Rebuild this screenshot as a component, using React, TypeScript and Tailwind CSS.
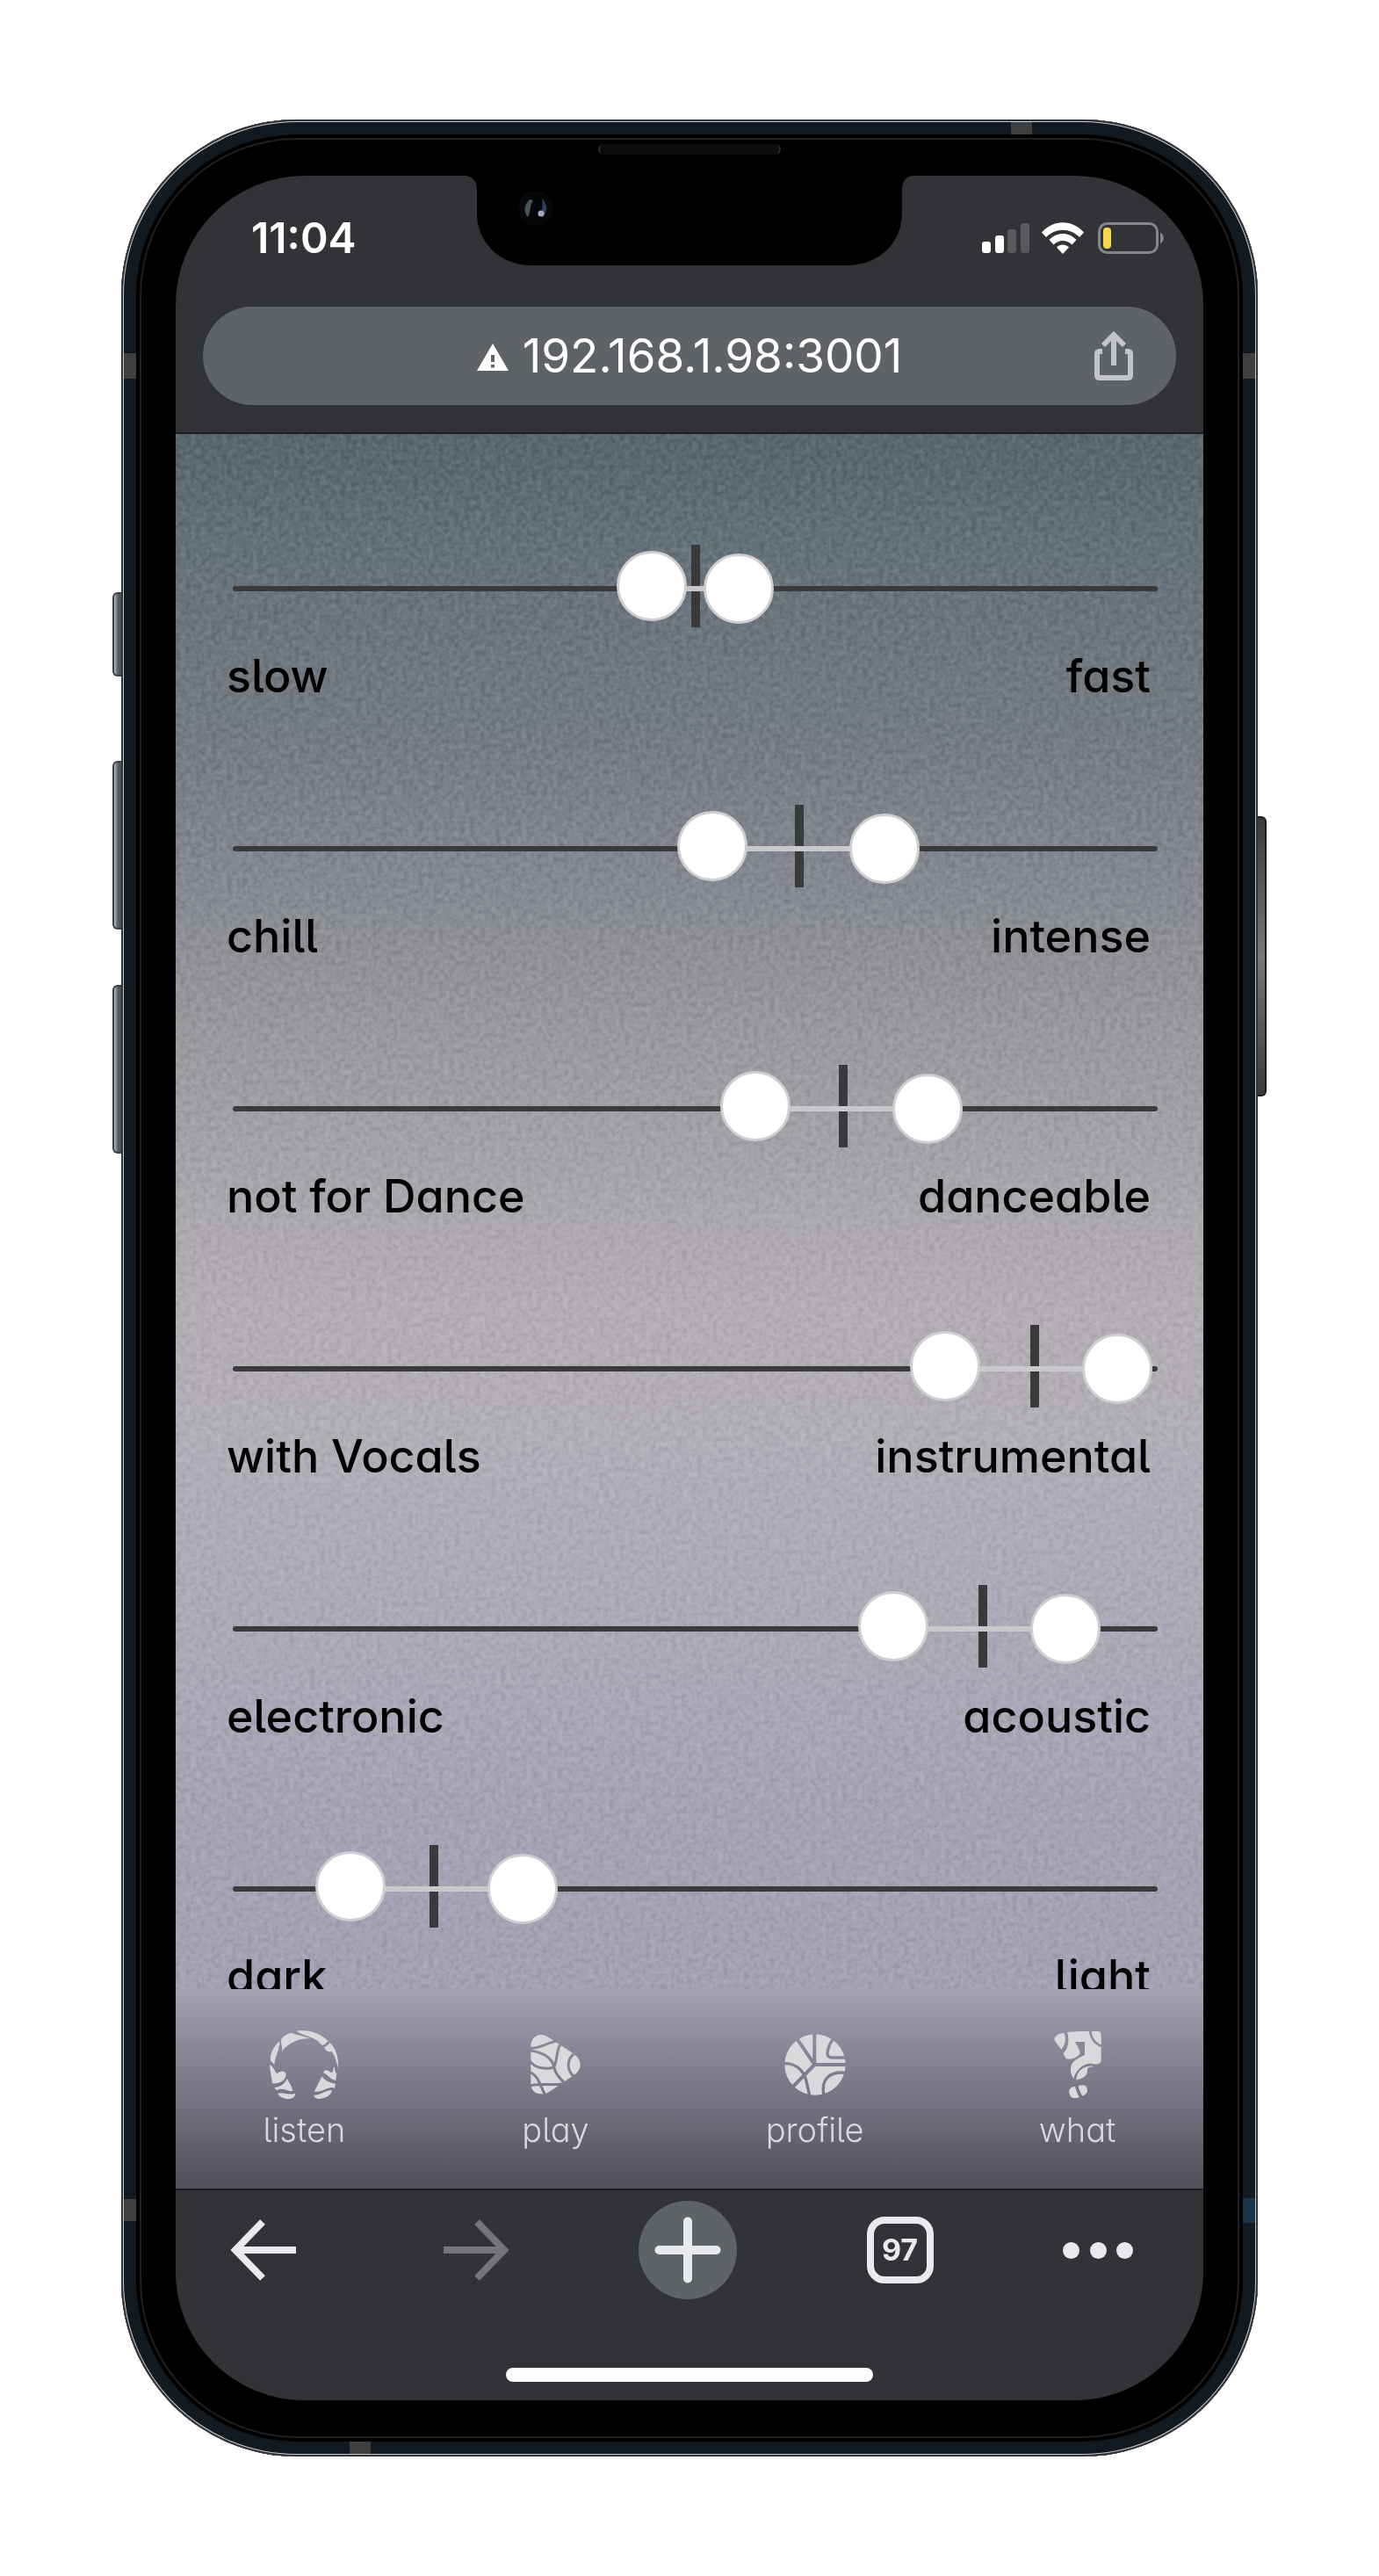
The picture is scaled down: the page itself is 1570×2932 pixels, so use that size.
import { useState } from "react";

type Trait = { low: string; high: string; min: number; max: number };

const TRAITS: Trait[] = [
  { low: "slow", high: "fast", min: 45, max: 55 },
  { low: "chill", high: "intense", min: 52, max: 72 },
  { low: "not for Dance", high: "danceable", min: 57, max: 77 },
  { low: "with Vocals", high: "instrumental", min: 79, max: 99 },
  { low: "electronic", high: "acoustic", min: 73, max: 93 },
  { low: "dark", high: "light", min: 10, max: 30 },
];

const RANGE =
  "pointer-events-none absolute -left-1 h-20 w-[calc(100%+8px)] appearance-none bg-transparent [&::-webkit-slider-thumb]:pointer-events-auto [&::-webkit-slider-thumb]:size-20 [&::-webkit-slider-thumb]:appearance-none [&::-webkit-slider-thumb]:rounded-full [&::-webkit-slider-thumb]:border-[3px] [&::-webkit-slider-thumb]:border-[#cfcfd1] [&::-webkit-slider-thumb]:bg-white";

/* Position of a 0-100 value on the track, with the given inset at both ends. */
const at = (v: number, inset: number) => `calc(${inset}px + (100% - ${inset * 2}px) * ${v / 100})`;

function TraitSlider({ trait }: { trait: Trait }) {
  const [min, setMin] = useState(trait.min);
  const [max, setMax] = useState(trait.max);
  return (
    <section className="px-[60px]">
      <div className="relative mr-[-8px] ml-[5px] h-[94px]">
        <div className="absolute inset-x-0 top-[47px] h-1.5 rounded-full bg-[#3a3a3b]" />
        <div
          className="absolute inset-y-0 w-2.5 -translate-x-1/2 bg-[#3a3a3b]"
          style={{ left: at((min + max) / 2, 31) }}
        />
        <div
          className="absolute top-[47px] h-1.5 bg-[#c9c9cb]"
          style={{ left: at(min, 36), width: `calc((100% - 72px) * ${(max - min) / 100})` }}
        />
        <input
          type="range"
          aria-label={`${trait.low} limit`}
          value={min}
          onChange={(e) => setMin(Math.min(Number(e.target.value), max))}
          className={`${RANGE} top-[7px]`}
        />
        <input
          type="range"
          aria-label={`${trait.high} limit`}
          value={max}
          onChange={(e) => setMax(Math.max(Number(e.target.value), min))}
          className={`${RANGE} top-2.5`}
        />
      </div>
      <div className="-ml-0.5 mt-[26px] flex h-[62px] justify-between text-[52px] leading-[60px] font-medium text-black [font-feature-settings:'cv05','cv11']">
        <span>{trait.low}</span>
        <span>{trait.high}</span>
      </div>
    </section>
  );
}

function ListenIcon() {
  return (
    <svg viewBox="39 30 240 240" className="size-20 fill-current" aria-hidden="true">
      <path d="M82 62C90 52 103 43 116 41C136 50 158 52 180 60C148 60 106 72 83 106C88 90 78 78 82 62Z" />
      <path d="M134 35C175 29 216 42 242 70L225 84C215 82 212 73 202 66C184 53 160 52 134 35Z" />
      <path d="M229 90C238 88 243 82 247 75C266 92 279 122 276 162C270 140 264 118 254 105C243 108 232 104 229 90Z" />
      <path d="M76 70C55 88 43 112 45 136L58 150C60 122 76 104 76 70Z" />
      <path d="M42 150C43 176 50 196 51 214C76 216 96 204 98 185C98 170 80 168 68 180C58 178 62 162 42 150Z" />
      <path d="M102 198C108 212 119 225 121 240C98 242 88 226 66 238L58 228C75 228 92 218 102 198Z" />
      <path d="M69 249C90 242 98 256 129 248C130 262 116 268 103 267C88 266 76 260 69 249Z" />
      <path d="M262 157C266 165 264 178 271 180L268 204C246 200 242 184 226 178C226 166 240 166 252 178C261 175 257 168 262 157Z" />
      <path d="M220 190C232 205 245 212 267 215L264 230C240 222 230 244 195 242C202 225 212 210 220 190Z" />
      <path d="M192 254C220 254 232 236 254 237C254 255 232 265 212 267C202 266 194 262 192 254Z" />
    </svg>
  );
}

function PlayIcon() {
  return (
    <svg viewBox="15 30 240 240" className="size-20" aria-hidden="true">
      <mask id="play-cuts" maskUnits="userSpaceOnUse" x="15" y="30" width="240" height="240">
        <rect x="15" y="30" width="240" height="240" fill="white" />
        <g fill="none" stroke="black" strokeWidth="9">
          <path d="M44 93C78 98 100 76 136 70" />
          <path d="M44 101C85 106 122 124 128 158" />
          <path d="M44 134C62 164 100 166 128 160" />
          <path d="M150 80C134 106 142 130 128 158C134 184 148 198 164 212" />
          <path d="M200 110C172 130 168 166 198 192" />
          <path d="M44 174C76 188 80 220 98 254" />
          <path d="M44 222C80 212 112 222 160 215" />
        </g>
      </mask>
      <path
        mask="url(#play-cuts)"
        className="fill-current"
        d="M49 86C50 62 65 48 85 48C100 49 115 60 130 70L198 115C212 126 218 138 218 150C218 165 210 176 196 186L122 236C107 247 96 252 82 250C64 248 49 238 49 212Z"
      />
    </svg>
  );
}

function ProfileIcon() {
  return (
    <svg viewBox="0 0 240 240" className="size-20" aria-hidden="true">
      <mask id="profile-cuts" maskUnits="userSpaceOnUse" x="0" y="0" width="240" height="240">
        <rect width="240" height="240" fill="white" />
        <g fill="none" stroke="black" strokeWidth="12">
          <path d="M118 10V120H230" />
          <path d="M56 28L118 120L40 200" />
          <path d="M12 116C54 114 82 140 90 176L102 230" strokeWidth="10" />
          <path d="M182 30C168 52 162 70 162 82C162 92 168 96 178 96H228" strokeWidth="10" />
          <path d="M226 148C170 142 138 168 150 226" strokeWidth="10" />
        </g>
      </mask>
      <circle cx="120" cy="120" r="104" className="fill-current" mask="url(#profile-cuts)" />
    </svg>
  );
}

function WhatIcon() {
  return (
    <svg viewBox="-6 30 240 240" className="size-20 fill-current" aria-hidden="true">
      <path d="M34 62C38 50 50 43 67 41C76 58 72 82 58 98C50 85 38 76 34 62Z" />
      <path d="M78 39C100 36 126 36 152 36C156 62 172 84 194 90V138C188 150 178 150 165 147C138 142 108 165 100 198C84 175 86 145 110 132C120 124 132 120 138 116V72H105C112 88 122 98 122 112C112 126 95 134 74 130L64 112C80 98 88 70 78 39Z" />
      <path d="M162 36H182C190 36 194 42 194 50V82C176 74 162 58 162 36Z" />
      <path d="M109 200C112 175 128 156 164 154V158C150 156 147 162 147 172C147 186 132 200 109 202Z" />
      <path d="M105 225C110 242 114 252 120 261C108 266 96 265 91 260C84 250 82 240 88 232C94 226 100 224 105 225Z" />
      <path d="M116 222C126 219 136 219 141 223C148 232 149 242 143 249C138 254 134 256 130 257C122 244 118 234 116 222Z" />
    </svg>
  );
}

const TABS = [
  { name: "listen", Icon: ListenIcon },
  { name: "play", Icon: PlayIcon },
  { name: "profile", Icon: ProfileIcon },
  { name: "what", Icon: WhatIcon },
];

function StatusBar() {
  return (
    <div className="flex h-[142px] items-center justify-between pr-11 pl-[86px]">
      <time className="text-[48px] leading-none font-semibold text-white">11:04</time>
      <div className="flex items-center">
        <svg viewBox="0 0 54 36" className="h-9 w-[54px]" role="img" aria-label="Signal">
          <rect x="0" y="22" width="10" height="13" rx="3" fill="white" />
          <rect x="15" y="15" width="10" height="20" rx="3" fill="white" />
          <rect x="29" y="8" width="10" height="27" rx="3" fill="#58595c" />
          <rect x="44" y="1" width="10" height="34" rx="3" fill="#58595c" />
        </svg>
        <svg viewBox="0 0 48 36" className="ml-3.5 h-9 w-12" role="img" aria-label="Wi-Fi">
          <path fill="white" d="M0 11.500C13-3.500 35-3.500 48 11.500L43 17C32 6 16 6 5 17Z" />
          <path fill="white" d="M8.500 20C17 10.500 31 10.500 39.500 20L34.500 25.500C28.500 19.500 19.500 19.500 13.500 25.500Z" />
          <path fill="white" d="M17 28.500C21 24.500 27 24.500 31 28.500L24 36Z" />
        </svg>
        <svg viewBox="0 0 76 36" className="ml-4 h-9 w-[76px]" role="img" aria-label="Battery low">
          <rect x="1.500" y="1.500" width="66" height="33" rx="9" fill="none" stroke="#85868a" strokeWidth="3" />
          <rect x="6" y="6" width="9" height="24" rx="4" fill="#f8d648" />
          <path d="M71 12C76 13 76 23 71 24Z" fill="#85868a" />
        </svg>
      </div>
    </div>
  );
}

function Notch() {
  return (
    <div className="absolute top-0 left-1/2 -translate-x-1/2">
      <svg viewBox="0 0 512 102" className="h-[102px] w-[512px]" aria-hidden="true">
        <path d="M0 0C10 0 14 7 14 16V42C14 78 42 102 76 102H436C470 102 498 78 498 42V16C498 7 502 0 512 0Z" fill="black" />
        <circle cx="81" cy="37" r="20" fill="#060708" />
        <circle cx="81" cy="37" r="13" fill="#04060a" />
        <path d="M74 27C67 33 67 42 72 47C75 42 74 34 78 28Z" fill="#48525b" />
        <path d="M88 26C95 32 95 42 88 48C86 42 90 36 88 26Z" fill="#28415d" />
        <circle cx="87" cy="43" r="3.500" fill="#a4aab8" />
      </svg>
    </div>
  );
}

function AddressBar() {
  return (
    <div className="mx-[31px] mt-[7px] grid h-28 grid-cols-[1fr_auto_1fr] items-center rounded-full bg-[#5f6267] px-12">
      <span />
      <button type="button" className="flex items-center gap-4 text-[53px] leading-none text-white">
        <svg viewBox="0 0 36 32" className="mt-1 h-8 w-9" role="img" aria-label="Not secure">
          <path d="M18 0L36 31H0Z" fill="white" />
          <path d="M18 13V21M18 24V27.500" stroke="#5f6267" strokeWidth="4" />
        </svg>
        192.168.1.98:3001
      </button>
      <button type="button" aria-label="Share" className="justify-self-end">
        <svg viewBox="0 0 46 58" className="h-[58px] w-[46px]" fill="none" stroke="#c2c4c8" strokeWidth="6" aria-hidden="true">
          <path d="M10 24H6.500Q4 24 4 27V51Q4 54 7 54H39Q42 54 42 51V27Q42 24 39.500 24H36" />
          <path d="M23 40V6M11 17L23 5L35 17" />
        </svg>
      </button>
    </div>
  );
}

function Grain() {
  return (
    <svg className="absolute inset-0 size-full opacity-20 mix-blend-soft-light" aria-hidden="true">
      <filter id="grain" x="0" y="0" width="100%" height="100%" colorInterpolationFilters="sRGB">
        <feTurbulence type="fractalNoise" baseFrequency="0.17" numOctaves="2" seed="4" />
        <feColorMatrix values="1.800 0 0 0 -0.400  1.800 0 0 0 -0.400  1.800 0 0 0 -0.400  0 0 0 0 1" />
      </filter>
      <rect width="100%" height="100%" filter="url(#grain)" />
    </svg>
  );
}

function Toolbar() {
  return (
    <footer className="h-[241px] border-t-2 border-[#1d1e21] bg-[#323337]">
      <div className="flex items-center justify-between pt-3 pr-20 pl-11">
        <button type="button" aria-label="Back" className="grid size-28 place-items-center text-[#e8eaed]">
          <svg viewBox="0 0 76 70" className="h-[70px] w-[76px]" fill="none" stroke="currentColor" strokeWidth="8" aria-hidden="true">
            <path d="M75 35H8M37 3L6 35L37 67" />
          </svg>
        </button>
        <button type="button" aria-label="Forward" disabled className="grid size-28 place-items-center text-[#75747a]">
          <svg viewBox="0 0 76 70" className="h-[70px] w-[76px]" fill="none" stroke="currentColor" strokeWidth="8" aria-hidden="true">
            <path d="M1 35H68M39 3L70 35L39 67" />
          </svg>
        </button>
        <button type="button" aria-label="New tab" className="grid size-28 place-items-center rounded-full bg-[#5f6368] text-[#e8eaed]">
          <svg viewBox="0 0 76 76" className="size-[76px]" fill="none" stroke="currentColor" strokeWidth="10" strokeLinecap="round" aria-hidden="true">
            <path d="M38 5.500V70.500M5.500 38H70.500" />
          </svg>
        </button>
        <button type="button" aria-label="97 open tabs" className="grid size-28 place-items-center text-[#e8eaed]">
          <span className="grid size-[76px] place-items-center rounded-[20px] border-8 border-current text-[34px] leading-none font-bold">97</span>
        </button>
        <button type="button" aria-label="More" className="flex w-20 justify-between text-[#e8eaed]">
          <span className="size-[19px] rounded-full bg-current" />
          <span className="size-[19px] rounded-full bg-current" />
          <span className="size-[19px] rounded-full bg-current" />
        </button>
      </div>
      <div className="mx-auto mt-[78px] h-4 w-[418px] rounded-full bg-[#fdfdfd]" />
    </footer>
  );
}

export default function App() {
  return (
    <div className="bg-white px-[138px] py-[136px] font-['Inter',sans-serif]">
      <div className="relative mx-auto">
        <div className="absolute top-[538px] -left-2.5 h-24 w-4 rounded-l-md border-2 border-r-0 border-[#3b3d40] bg-linear-to-r from-[#b9bcbf] via-[#5c5c5e] via-30% to-[#3c3c3e]" />
        <div className="absolute top-[730px] -left-2.5 h-48 w-4 rounded-l-md border-2 border-r-0 border-[#3b3d40] bg-linear-to-r from-[#b9bcbf] via-[#5c5c5e] via-30% to-[#3c3c3e]" />
        <div className="absolute top-[985px] -left-2.5 h-48 w-4 rounded-l-md border-2 border-r-0 border-[#3b3d40] bg-linear-to-r from-[#b9bcbf] via-[#5c5c5e] via-30% to-[#3c3c3e]" />
        <div className="absolute top-[793px] -right-2.5 h-[319px] w-4 rounded-r-md border-2 border-l-0 border-[#1c1d1f] bg-linear-to-b from-[#3a3a3c] via-[#77777a] to-[#3a3a3c]" />

        <div className="relative rounded-[200px] bg-black px-[62px] py-16 shadow-[inset_0_0_0_2px_#2f3236,inset_0_0_0_3px_#c4c7ca,inset_0_0_0_17px_#111921,inset_0_0_0_21px_#000000,inset_0_0_0_23px_#1f2022]">
          <div className="absolute top-[266px] left-[3px] h-[29px] w-3.5 bg-[#3e3f41]" />
          <div className="absolute top-[266px] right-[3px] h-[29px] w-3.5 bg-[#3e3f41]" />
          <div className="absolute bottom-[268px] left-[3px] h-[25px] w-3.5 bg-[#3e3f41]" />
          <div className="absolute right-[3px] bottom-[266px] h-7 w-3.5 bg-[#1b334b]" />
          <div className="absolute top-[3px] right-[257px] h-3.5 w-6 bg-[#3e3f41]" />
          <div className="absolute bottom-[3px] left-[260px] h-3.5 w-6 bg-[#3e3f41]" />
          <div className="absolute top-7 left-1/2 h-3 w-[208px] -translate-x-1/2 rounded-full border-x-2 border-[#2a2b2d] bg-[#0b0c0d]" />

          <div className="relative flex aspect-[1170/2532] flex-col overflow-hidden rounded-[147px] bg-[#323337]">
            <header className="relative border-b-2 border-[#1d1e21] pb-[31px]">
              <Notch />
              <StatusBar />
              <AddressBar />
            </header>

            <main className="relative min-h-0 flex-1 overflow-hidden bg-[linear-gradient(180deg,#57676c_0%,#66727a_8%,#757b83_19%,#84878f_28%,#939499_35%,#a1a0a6_44%,#b3aeb4_56%,#b2aeb7_65%,#adaab7_75%,#a6a4b4_88%,#a3a1b3_100%)]">
              <Grain />
              <div className="relative flex flex-col gap-[114px] pt-[126px]">
                {TRAITS.map((t) => (
                  <TraitSlider key={t.low} trait={t} />
                ))}
              </div>
            </main>

            <nav className="flex h-[227px] items-start justify-around bg-[linear-gradient(180deg,#a3a2b3_0%,#8d8b9b_26%,#7b7988_48%,#676673_72%,#575661_90%,#4f4e59_100%)] pt-[46px]">
              {TABS.map(({ name, Icon }) => (
                <a
                  key={name}
                  href={`#${name}`}
                  className="flex flex-col items-center gap-2.5 text-[38px] leading-[48px] font-light text-[#d9d9dc] [font-feature-settings:'cv05','cv11']"
                >
                  <Icon />
                  {name}
                </a>
              ))}
            </nav>

            <Toolbar />
          </div>
        </div>
      </div>
    </div>
  );
}
